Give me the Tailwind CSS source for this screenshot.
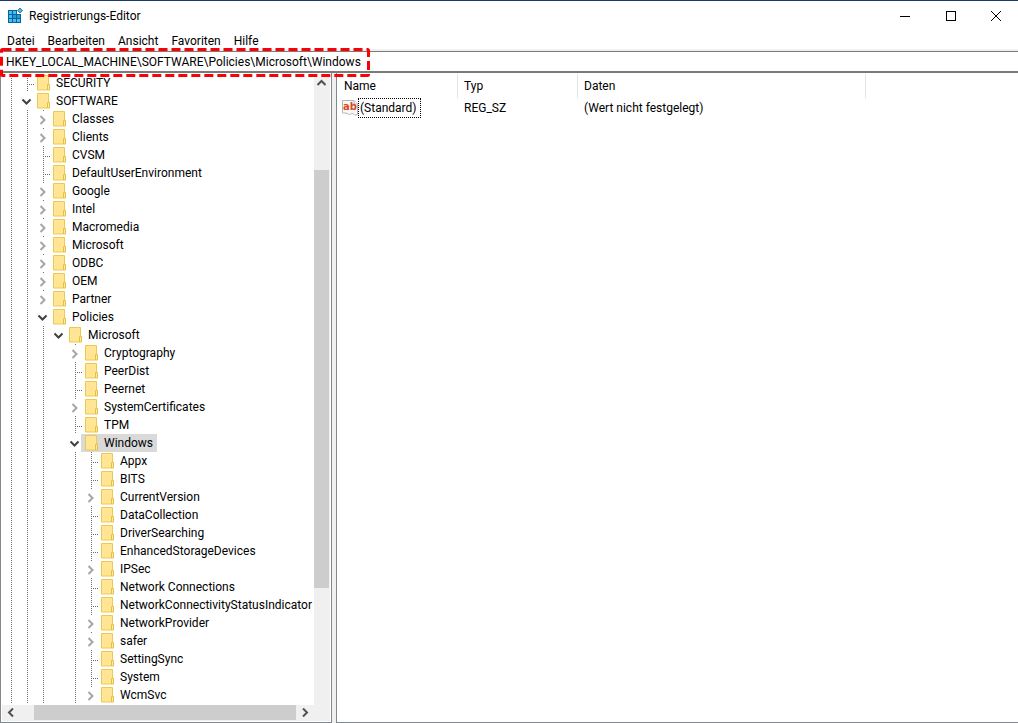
<!DOCTYPE html>
<html lang="de">
<head>
<meta charset="utf-8">
<title>Registrierungs-Editor</title>
<script src="https://cdn.jsdelivr.net/npm/@tailwindcss/browser@4"></script>
</head>
<body class="h-screen overflow-hidden bg-[#f0f0f0] font-[Roboto,sans-serif] text-[12px] leading-[18px] text-black">
<svg class="hidden" aria-hidden="true">
  <symbol id="folder" viewBox="0 0 16 18">
    <path d="M2.500 1.500h11v9h1v5.500h-12z" fill="#ffe594"/>
    <path d="M2.500 16V1.500h11v9M2.500 16h10" fill="none" stroke="#ecc94f"/>
    <path d="M12.500 16v-5.500h2v5.500z" fill="#ffe9a6" stroke="#e8c03c"/>
  </symbol>
  <symbol id="line" viewBox="0 0 16 18"><path d="M8.500 0v18" stroke="#6e6e6e" stroke-dasharray="1 1"/></symbol>
  <symbol id="branch" viewBox="0 0 16 18"><path d="M8.500 0v18M10 10.500h6" fill="none" stroke="#6e6e6e" stroke-dasharray="1 1"/></symbol>
  <symbol id="closed" viewBox="0 0 16 18"><path d="M8.500 0v1" stroke="#6e6e6e"/><path d="M5.500 6l4 4-4 4" fill="none" stroke="#a6a6a6" stroke-width="2"/></symbol>
  <symbol id="open" viewBox="0 0 16 18"><path d="M3.500 7.500l4 4 4-4" fill="none" stroke="#404040" stroke-width="2"/></symbol>
</svg>
<div class="flex h-full flex-col">
  <header class="border-t border-[#1b3a66] bg-white">
    <div class="flex h-[30px] items-center">
      <svg class="ml-[7px] size-4" viewBox="0 0 16 16" aria-hidden="true">
        <rect x="1" y="2" width="13" height="13" fill="#0b639b"/>
        <g fill="#45bdf0"><rect x="2" y="3" width="3" height="3"/><rect x="6" y="3" width="3" height="3"/><rect x="2" y="7" width="3" height="3"/><rect x="2" y="11" width="3" height="3"/><rect x="6" y="11" width="3" height="3"/><rect x="10" y="11" width="3" height="3"/></g>
        <g fill="#2a98d0"><rect x="6" y="7" width="3" height="3"/><rect x="10" y="7" width="3" height="3"/></g>
        <path d="M10 0h6v6h-6z" fill="#fff"/>
        <path d="M13 0l2.500 2.500-2.500 2.500-2.500-2.500z" fill="#58b4e0" stroke="#2483b8" stroke-width="1"/>
      </svg>
      <h1 class="ml-[6px]">Registrierungs-Editor</h1>
      <div class="ml-auto flex h-full">
        <button aria-label="Minimieren" class="flex w-[46px] items-center justify-center"><svg width="10" height="10"><path d="M0 5.500h10" stroke="#000"/></svg></button>
        <button aria-label="Maximieren" class="flex w-[46px] items-center justify-center"><svg width="10" height="10"><rect x=".5" y=".5" width="9" height="9" fill="none" stroke="#000"/></svg></button>
        <button aria-label="Schließen" class="flex w-11 items-center justify-center"><svg width="10" height="10"><path d="M0 0l10 10M10 0L0 10" stroke="#000"/></svg></button>
      </div>
    </div>
    <nav class="flex h-[18px] gap-[13px] pt-px pl-[7px]">
      <button>Datei</button><button>Bearbeiten</button><button>Ansicht</button><button>Favoriten</button><button>Hilfe</button>
    </nav>
  </header>
  <div class="relative pt-[2px]">
    <input aria-label="Adresse" class="block h-[22px] w-full border-t border-b-2 border-[#7a7a7a] bg-white pl-[6px] outline-none" value="HKEY_LOCAL_MACHINE\SOFTWARE\Policies\Microsoft\Windows">
    <svg class="pointer-events-none absolute -top-px left-0 z-10" width="370" height="29" aria-hidden="true">
      <rect x="1.500" y="1.500" width="367" height="26" rx="1" fill="none" stroke="#fb0007" stroke-width="3" stroke-dasharray="9 4"/>
    </svg>
  </div>
  <main class="flex min-h-0 flex-1 gap-1">
    <section class="flex w-[332px] shrink-0 flex-col border-x border-b border-[#828790] bg-white p-px">
      <div class="flex min-h-0 flex-1">
        <ul id="tree" role="tree" aria-label="Schlüssel" class="min-w-0 flex-1 overflow-hidden pl-px"></ul>
        <div class="flex w-4 shrink-0 flex-col bg-[#f0f0f0] pr-px">
          <button aria-label="Nach oben" class="flex h-[17px] items-center justify-center"><svg width="9" height="7"><path d="M.5 6l4-4 4 4" fill="none" stroke="#505050" stroke-width="2"/></svg></button>
          <div class="mt-[79px] h-[418px] bg-[#cdcdcd]"></div>
        </div>
      </div>
      <div class="flex h-4 bg-[#f0f0f0] pb-px">
        <button aria-label="Nach links" class="flex w-4 items-center justify-center"><svg width="7" height="9"><path d="M6 .5l-4 4 4 4" fill="none" stroke="#505050" stroke-width="2"/></svg></button>
        <div class="ml-4 h-full w-[262px] bg-[#cdcdcd]"></div>
        <button aria-label="Nach rechts" class="flex w-[18px] items-center justify-center"><svg width="7" height="9"><path d="M1 .5l4 4-4 4" fill="none" stroke="#505050" stroke-width="2"/></svg></button>
      </div>
    </section>
    <section class="min-w-0 flex-1 border-b border-l border-[#828790] bg-white pt-px">
      <table class="w-full table-fixed border-separate border-spacing-0 text-left">
        <colgroup><col class="w-[121px]"><col class="w-[120px]"><col class="w-[288px]"><col></colgroup>
        <thead>
          <tr class="h-6">
            <th class="border-r border-[#e5e5e5] pl-[7px] font-normal">Name</th>
            <th class="border-r border-[#e5e5e5] pl-[6px] font-normal">Typ</th>
            <th class="border-r border-[#e5e5e5] pl-[6px] font-normal">Daten</th>
            <td></td>
          </tr>
        </thead>
        <tbody>
          <tr>
            <td class="pl-[5px]">
              <div class="flex items-center">
                <svg class="size-4 shrink-0" viewBox="0 0 16 16" aria-hidden="true">
                  <path d="M.500.500h11.500l3.500 3.500v10.500c-2 1-3 .5-4-.5-1.500-1.500-2.500.500-4 .5s-2-1.500-3.500-1.500-2 .5-3.500 0z" fill="#f8f8f8" stroke="#b4b4b4"/>
                  <path d="M12 .500v3.500h3.500" fill="#fff" stroke="#b4b4b4"/>
                  <text x="1" y="10" font-family="DejaVu Sans" font-weight="700" font-size="10" fill="#d9481f">ab</text>
                </svg>
                <span class="border border-dotted border-black pr-[3px] pl-px">(Standard)</span>
              </div>
            </td>
            <td class="pl-[6px]">REG_SZ</td>
            <td class="pl-[6px]">(Wert nicht festgelegt)</td>
            <td></td>
          </tr>
        </tbody>
      </table>
    </section>
  </main>
</div>
<script>
  // One string per visible row: guide cells (| line, + branch, > closed, v open, . empty), then the key name.
  const rows = [
    '|+ SECURITY', '|v SOFTWARE', '||> Classes', '||> Clients', '||+ CVSM', '||+ DefaultUserEnvironment',
    '||> Google', '||> Intel', '||> Macromedia', '||> Microsoft', '||> ODBC', '||> OEM', '||> Partner',
    '||v Policies', '|||v Microsoft', '|||.> Cryptography', '|||.+ PeerDist', '|||.+ Peernet',
    '|||.> SystemCertificates', '|||.+ TPM', '|||.v Windows', '|||.|+ Appx', '|||.|+ BITS',
    '|||.|> CurrentVersion', '|||.|+ DataCollection', '|||.|+ DriverSearching', '|||.|+ EnhancedStorageDevices',
    '|||.|> IPSec', '|||.|+ Network Connections', '|||.|+ NetworkConnectivityStatusIndicator',
    '|||.|> NetworkProvider', '|||.|> safer', '|||.|+ SettingSync', '|||.|+ System', '|||.|> WcmSvc'
  ];
  const symbols = { '|': 'line', '+': 'branch', '>': 'closed', 'v': 'open' };
  const selected = 'Windows';
  document.getElementById('tree').innerHTML = rows.map(row => {
    const split = row.indexOf(' ');
    const guides = row.slice(0, split), name = row.slice(split + 1);
    const cells = [...guides].map(c => {
      const icon = `<svg class="h-[18px] w-4">${symbols[c] ? `<use href="#${symbols[c]}"/>` : ''}</svg>`;
      return c === '>' || c === 'v' ? `<button class="w-4 shrink-0" aria-label="${name} umschalten">${icon}</button>` : `<span class="w-4 shrink-0">${icon}</span>`;
    }).join('');
    const on = name === selected;
    return `<li role="treeitem" aria-level="${guides.length}" aria-selected="${on}" class="flex h-[18px] whitespace-nowrap">${cells}` +
      `<span class="-ml-[2px] flex pr-1 pl-[2px] ${on ? 'bg-[#d9d9d9]' : ''}"><svg class="h-[18px] w-4 shrink-0"><use href="#folder"/></svg><span class="pl-[5px]">${name}</span></span></li>`;
  }).join('');
</script>
</body>
</html>
